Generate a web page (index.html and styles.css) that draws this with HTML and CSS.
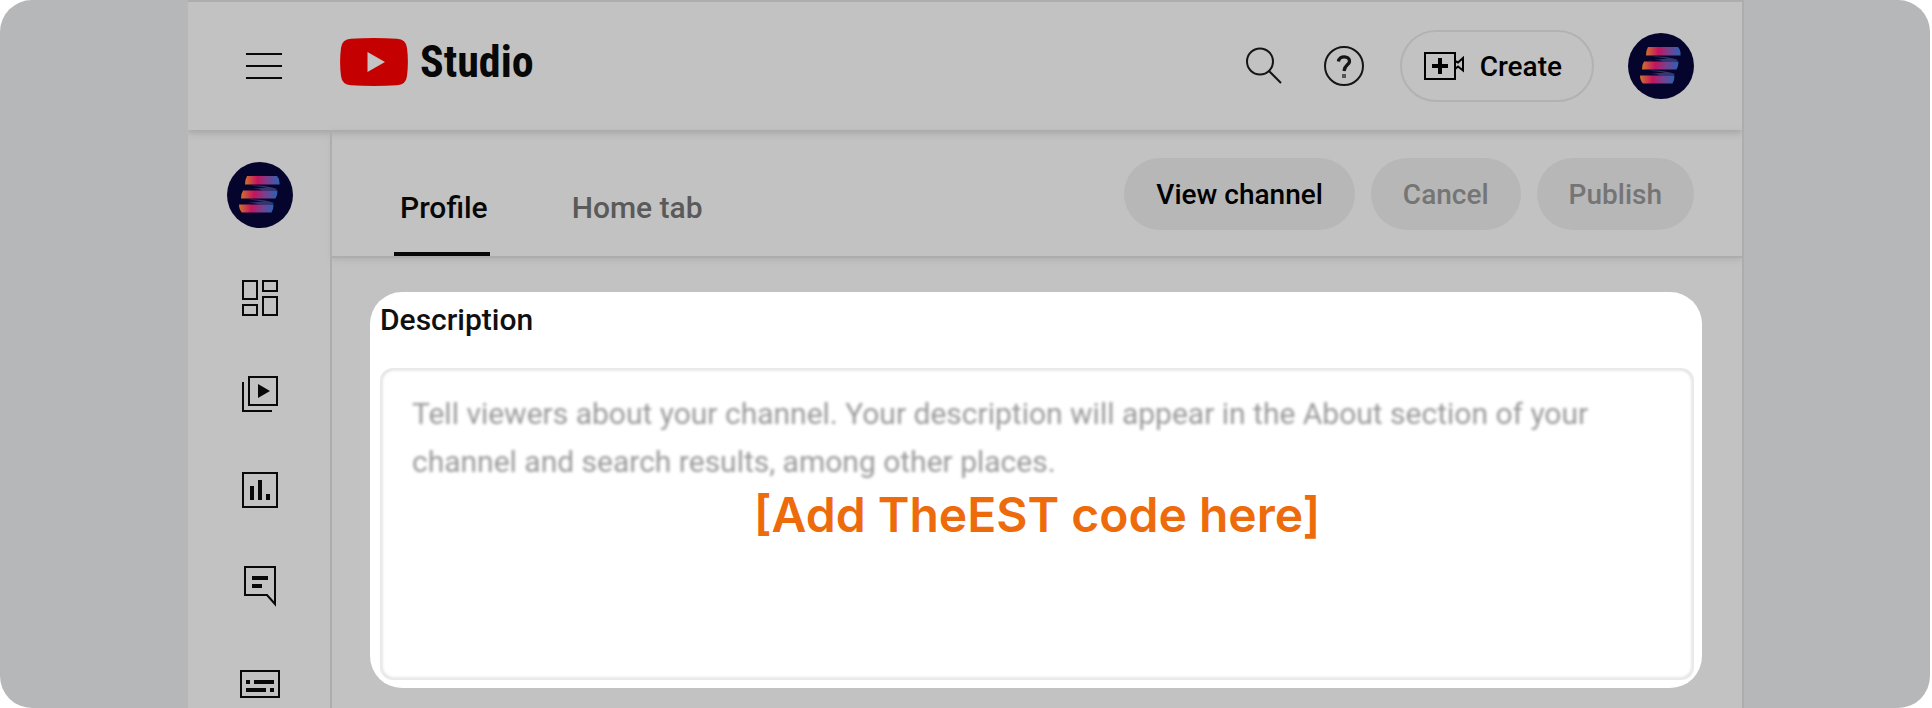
FILE: index.html
```html
<!DOCTYPE html>
<html lang="en">
<head>
<meta charset="utf-8">
<meta name="viewport" content="width=device-width, initial-scale=1">
<title>Studio – Channel profile</title>
<link rel="stylesheet" href="styles.css">
</head>
<body>
<svg class="defs" aria-hidden="true">
  <defs>
    <linearGradient id="ribbon" x1="0" x2="1" y1="0" y2="0">
      <stop offset="0" stop-color="#d0702c"/>
      <stop offset=".36" stop-color="#c4145f"/>
      <stop offset=".65" stop-color="#7a3f8c"/>
      <stop offset="1" stop-color="#2b62b4"/>
    </linearGradient>
    <symbol id="brand" viewBox="0 0 66 66">
      <circle cx="33" cy="33" r="33" fill="#05042c"/>
      <path d="M24 23.500Q40 23 50 27L48 28.500L36 28.500Q28 26 19 28Q30 26 40 25.500Z" fill="#34376f"/>
      <path d="M21 37.500Q37 37 47 41L45 42.500L33 42.500Q25 40 16 42Q27 40 37 39.500Z" fill="#34376f"/>
      <path d="M20 14h30q3 3 2.500 8.500H18q0-5 2-8.500z" fill="url(#ribbon)"/>
      <path d="M16 28.500h34.500q0 5-2 8H14q0-5 2-8z" fill="url(#ribbon)"/>
      <path d="M12 42.500h34.500q0 5-2 8H15q-3-3-3-8z" fill="url(#ribbon)"/>
    </symbol>
  </defs>
</svg>
<div class="backdrop">
  <div class="studio">
    <header class="topbar">
      <button class="icon-button" aria-label="Menu">
        <svg width="36" height="28" viewBox="0 0 36 28" stroke="#080808" stroke-width="2"><path d="M0 2h36M0 14h36M0 26h36"/></svg>
      </button>
      <a class="logo" href="#" aria-label="Studio home">
        <svg width="68" height="48" viewBox="0 0 68 48"><path d="M11 .8Q34-.8 57 .8Q66 1.200 67 10Q68.800 24 67 38Q66 46.800 57 47.200Q34 48.800 11 47.200Q2 46.800 1 38Q-.8 24 1 10Q2 1.200 11 .8Z" fill="#c40000"/><path d="M27.500 14L45 24L27.500 34Z" fill="#c4c4c4"/></svg>
        <span class="logo-text">Studio</span>
      </a>
      <div class="tools">
        <button class="search" aria-label="Search">
          <svg width="40" height="40" viewBox="0 0 40 40" fill="none" stroke="#151515" stroke-width="2"><circle cx="16" cy="15.500" r="13"/><path d="M25 25L37 37"/></svg>
        </button>
        <button class="icon-button" aria-label="Help">
          <svg width="40" height="40" viewBox="0 0 40 40" fill="none" stroke="#151515"><circle cx="20" cy="20" r="19" stroke-width="2"/><path d="M14.500 15.500C15 9 26 9.500 25.500 15.500C25.200 19 20.500 19 20 25" stroke-width="3.300"/><path d="M20 28v4" stroke="#555" stroke-width="4"/></svg>
        </button>
        <button class="create">
          <svg width="40" height="28" viewBox="0 0 40 28" fill="none" stroke="#000" stroke-width="2"><path d="M1 1h30v26H1z"/><path d="M16 6v16M8 14h16" stroke-width="4"/><path d="M31 9L34 10.500L39 6V18.500L34 14.500L31 17"/></svg>
          Create
        </button>
        <button class="icon-button" aria-label="Account"><svg width="66" height="66"><use href="#brand"/></svg></button>
      </div>
    </header>
    <div class="body">
      <nav class="sidebar" aria-label="Studio sections">
        <a class="channel" href="#" aria-label="Your channel"><svg width="66" height="66"><use href="#brand"/></svg></a>
        <a href="#" aria-label="Dashboard"><svg width="48" height="48" viewBox="0 0 48 48" fill="none" stroke="#080808" stroke-width="2"><path d="M7 7h14v18H7zM27 7h14v10H27zM7 31h14v10H7zM27 23h14v18H27z"/></svg></a>
        <a href="#" aria-label="Content"><svg width="48" height="48" viewBox="0 0 48 48" fill="none" stroke="#080808" stroke-width="2"><path d="M13 7h28v28H13zM7 12v29h29"/><path d="M22 14L34 21L22 28Z" fill="#080808" stroke="none"/></svg></a>
        <a href="#" aria-label="Analytics"><svg width="48" height="48" viewBox="0 0 48 48" fill="none" stroke="#080808" stroke-width="2"><path d="M7 7h34v34H7z"/><path d="M16 20v14M24 14v20M32 28v6" stroke-width="4"/></svg></a>
        <a href="#" aria-label="Comments"><svg width="48" height="48" viewBox="0 0 48 48" fill="none" stroke="#080808" stroke-width="2"><path d="M31 33H9V5h30v37z"/><path d="M16 16h16M16 24h10" stroke-width="4"/></svg></a>
        <a href="#" aria-label="Subtitles"><svg width="48" height="48" viewBox="0 0 48 48" fill="none" stroke="#080808" stroke-width="2"><path d="M5 13h38v26H5z"/><path d="M10 24h4M18 24h20M10 32h20M34 32h4" stroke-width="4"/></svg></a>
      </nav>
      <main class="main">
        <div class="tabbar">
          <div class="tabs" role="tablist">
            <button class="tab tab-active" role="tab" aria-selected="true">Profile</button>
            <button class="tab" role="tab" aria-selected="false">Home tab</button>
          </div>
          <div class="actions">
            <button class="pill">View channel</button>
            <button class="pill" disabled>Cancel</button>
            <button class="pill" disabled>Publish</button>
          </div>
        </div>
        <section class="card">
          <label class="card-title" for="description">Description</label>
          <div class="field">
            <textarea id="description" placeholder="Tell viewers about your channel. Your description will appear in the About section of your channel and search results, among other places."></textarea>
            <p class="hint">[Add TheEST code here]</p>
          </div>
        </section>
      </main>
    </div>
  </div>
</div>
</body>
</html>
```
FILE: styles.css
```css
* { box-sizing: border-box; }

body {
  margin: 0;
  background: #fff;
  font-family: Roboto, "Liberation Sans", sans-serif;
  font-size: 28px;
  font-weight: 500;
  color: #080808;
}

button {
  border: 0;
  padding: 0;
  background: none;
  font: inherit;
  color: inherit;
}

a { color: inherit; text-decoration: none; }
svg { display: block; }
.defs { position: absolute; width: 0; height: 0; }

.backdrop {
  display: flex;
  min-height: 100vh;
  margin-right: 2px;
  padding: 0 186px 0 188px;
  border-radius: 32px;
  background: #b5b7b9;
}

.studio {
  flex: 1;
  display: flex;
  flex-direction: column;
  overflow: hidden;
  border-top: 2px solid #adadad;
  border-right: 2px solid #adadad;
  background: #c2c2c2;
}

.topbar {
  display: flex;
  align-items: center;
  height: 128px;
  padding: 0 48px 0 58px;
  box-shadow: 0 3px 7px #a4a4a4;
}

.logo {
  display: flex;
  align-items: center;
  gap: 12px;
  margin: 0 0 8px 58px;
}

.logo-text {
  font-family: "Roboto Condensed", "Open Sans Condensed", Roboto, sans-serif;
  font-size: 44px;
  line-height: 48px;
  font-weight: 700;
}

.tools {
  display: flex;
  align-items: center;
  margin-left: auto;
  gap: 36px;
}

.search { margin-right: 4px; }

.create {
  display: flex;
  align-items: center;
  gap: 16px;
  height: 72px;
  margin-right: -2px;
  padding: 0 30px 0 22px;
  border: 2px solid #b2b2b2;
  border-radius: 36px;
  color: #000;
}

.body { flex: 1; display: flex; }

.sidebar {
  display: flex;
  flex-direction: column;
  align-items: center;
  gap: 48px;
  width: 144px;
  padding: 32px 0 0 2px;
  border-right: 2px solid #adadad;
}

.channel { margin-bottom: -2px; }

.main { flex: 1; }

.tabbar {
  display: flex;
  justify-content: space-between;
  height: 128px;
  padding: 0 48px 0 62px;
  border-bottom: 2px solid #adadad;
  box-shadow: 0 2px 6px #b0b0b0;
}

.tabs { display: flex; gap: 76px; }

.tab {
  padding: 32px 2px 0 6px;
  border-bottom: 4px solid transparent;
  font-size: 30px;
  color: #5a5a5a;
}

.tab-active { border-color: #080808; color: #080808; }

.actions {
  display: flex;
  gap: 16px;
  padding-top: 28px;
}

.pill {
  height: 72px;
  padding: 0 32px;
  border-radius: 36px;
  background: #b7b7b7;
  color: #000;
}

.pill:disabled { color: #757575; }

.card {
  margin: 34px 40px 20px 38px;
  padding: 10px 8px 8px 10px;
  border-radius: 32px;
  background: #fff;
}

.card-title {
  display: block;
  height: 66px;
  font-size: 30px;
  line-height: 36px;
  color: #101010;
}

.field {
  position: relative;
  overflow: hidden;
  border-radius: 12px;
}

.field textarea {
  display: block;
  width: 100%;
  height: 312px;
  padding: 20px 30px;
  border: 2px solid #d2d2d2;
  border-radius: 14px;
  background: #fff;
  font: 400 30px/48px Roboto, "Liberation Sans", sans-serif;
  color: #080808;
  resize: none;
  filter: blur(0.05em);
}

.field textarea::placeholder { color: #999; }

/* Callout laid over the empty part of the text box */
.hint {
  position: absolute;
  inset: 117px 0 auto;
  margin: 0;
  text-align: center;
  font: 600 48px/60px Inter, "Liberation Sans", sans-serif;
  color: #ee6b0c;
  pointer-events: none;
}
```
